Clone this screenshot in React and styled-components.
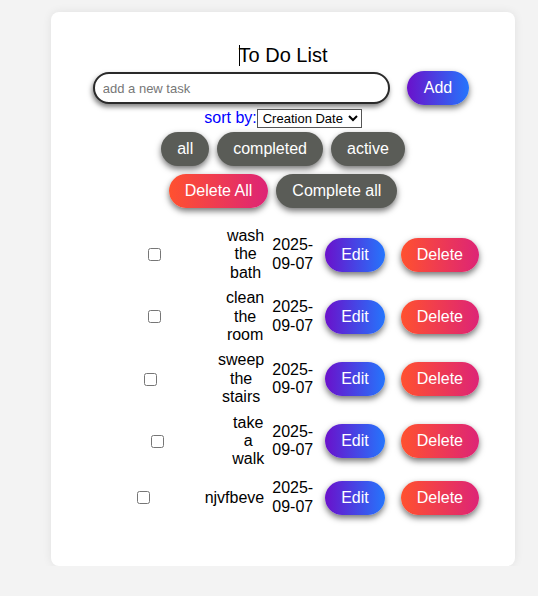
import styled, { createGlobalStyle, css } from "styled-components";

const GlobalStyle = createGlobalStyle`
  body {
    margin: 0;
    background-color: #f3f3f3;
    font-family: "Liberation Sans", Arial, sans-serif;
  }
`;

const Card = styled.main`
  width: 464px;
  box-sizing: border-box;
  margin: 12px 0 0 51px;
  padding: 32px 0 46px;
  background-color: #fff;
  border-radius: 8px;
  box-shadow: 0 0 10px rgba(0, 0, 0, 0.08);
  display: flex;
  flex-direction: column;
  align-items: center;
`;

const Title = styled.h1`
  margin: 0;
  font-size: 20px;
  font-weight: 400;
  line-height: 23px;
  color: #000;
`;

const Caret = styled.span`
  display: inline-block;
  width: 1px;
  height: 21px;
  margin-right: -1px;
  background-color: #000;
  vertical-align: -4px;
`;

const InputRow = styled.div`
  display: flex;
  align-items: center;
  gap: 17px;
  margin-top: 4px;
  padding-right: 4px;
`;

const TaskInput = styled.input`
  width: 297px;
  height: 32px;
  box-sizing: border-box;
  padding: 0 8px;
  border: 2px solid #2a2a2a;
  border-radius: 16px;
  font-family: inherit;
  font-size: 13px;
  outline: none;
  box-shadow: -1px 3px 5px rgba(0, 0, 0, 0.5);

  &::placeholder {
    color: #777;
  }
`;

const gradients = {
  blue: "linear-gradient(to right, #6a11cb, #2575fc)",
  red: "linear-gradient(to right, #ff512f, #dd2476)",
  gray: "#5a5c57",
};

const Button = styled.button`
  height: 34px;
  padding: 0 16px;
  border: none;
  border-radius: 17px;
  background: ${({ $tone }) => gradients[$tone || "gray"]};
  color: #fff;
  font-family: inherit;
  font-size: 16px;
  box-shadow: 0 3px 6px rgba(0, 0, 0, 0.55);
  cursor: pointer;
  white-space: nowrap;
  ${({ $wide }) =>
    $wide &&
    css`
      padding: 0 17px;
    `}
`;

const SortRow = styled.div`
  display: flex;
  align-items: center;
  margin-top: 4px;
  height: 18px;
  color: #0000ff;
  font-size: 16px;

  select {
    height: 19px;
    font-family: inherit;
    font-size: 13px;
    color: #000;
    border: 1px solid #555;
    border-radius: 0;
    background: #fff;
    padding: 0 1px;
  }
`;

const ButtonRow = styled.div`
  display: flex;
  gap: 8px;
  margin-top: ${({ $top }) => $top}px;
`;

const TaskList = styled.ul`
  list-style: none;
  margin: 19px 0 0;
  padding: 0;
  width: 402px;
  display: flex;
  flex-direction: column;
  gap: 7px;
`;

const TaskRow = styled.li`
  display: flex;
  align-items: center;
  font-size: 16px;
  line-height: 18.4px;
  color: #000;

  ${Button} {
    margin: 5px 0;
  }
`;

const CheckCell = styled.div`
  flex: 1;
  display: flex;
  justify-content: center;

  input {
    margin: 0;
    width: 13px;
    height: 13px;
  }
`;

const TaskText = styled.span`
  width: min-content;
  text-align: center;
`;

const TaskDate = styled.span`
  width: min-content;
  margin-left: 8px;
`;

const EditButton = styled(Button)`
  margin-left: 12px !important;
`;

const DeleteButton = styled(Button)`
  margin-left: 16px !important;
  margin-right: 5px !important;
`;

const tasks = [
  { id: 1, text: "wash the bath", date: "2025-09-07" },
  { id: 2, text: "clean the room", date: "2025-09-07" },
  { id: 3, text: "sweep the stairs", date: "2025-09-07" },
  { id: 4, text: "take a walk", date: "2025-09-07" },
  { id: 5, text: "njvfbeve", date: "2025-09-07" },
];

const App = () => {
  return (
    <>
      <GlobalStyle />
      <Card>
        <Title>
          <Caret />
          To Do List
        </Title>
        <InputRow>
          <TaskInput placeholder="add a new task" />
          <Button $tone="blue" $wide>
            Add
          </Button>
        </InputRow>
        <SortRow>
          sort by:
          <select defaultValue="date">
            <option value="date">Creation Date</option>
            <option value="name">Name</option>
          </select>
        </SortRow>
        <ButtonRow $top={5}>
          <Button>all</Button>
          <Button>completed</Button>
          <Button>active</Button>
        </ButtonRow>
        <ButtonRow $top={8}>
          <Button $tone="red">Delete All</Button>
          <Button>Complete all</Button>
        </ButtonRow>
        <TaskList>
          {tasks.map((task) => (
            <TaskRow key={task.id}>
              <CheckCell>
                <input type="checkbox" />
              </CheckCell>
              <TaskText>{task.text}</TaskText>
              <TaskDate>{task.date}</TaskDate>
              <EditButton $tone="blue">Edit</EditButton>
              <DeleteButton $tone="red">Delete</DeleteButton>
            </TaskRow>
          ))}
        </TaskList>
      </Card>
    </>
  );
};

export default App;
